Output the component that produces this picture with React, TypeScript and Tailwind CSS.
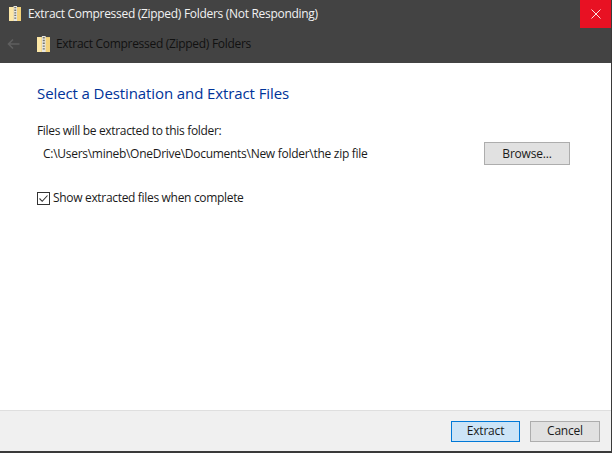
function ZipIcon({ width, height }: { width: number; height: number }) {
  return (
    <svg width={width} height={height} viewBox="0 0 12 15" preserveAspectRatio="none" className="shrink-0">
      <path d="M0 1 h12 v14 h-12 z" fill="#f3d27a" />
      <path d="M0 1 h4 v14 h-4 z" fill="#fce7a6" />
      <path d="M4.5 0 h3.5 v15 h-3.5 z" fill="#e6e6e2" />
      <path d="M5.3 1 h1.9 v1.3 h-1.9 z M5.3 3.6 h1.9 v1.3 h-1.9 z M5.3 6.2 h1.9 v1.3 h-1.9 z M5.3 8.8 h1.9 v1.3 h-1.9 z M5.3 11.4 h1.9 v1.3 h-1.9 z" fill="#77756a" />
    </svg>
  );
}

export default function App() {
  return (
    <div className="flex h-[453px] w-[612px] flex-col overflow-hidden border-r border-b-2 border-[#3a3a3a] bg-white font-['Open_Sans','Noto_Sans',sans-serif] text-[12px] text-[#1a1a1a]">
      {/* Title bar */}
      <div className="flex h-[28px] shrink-0 items-start bg-[#434343]">
        <div className="flex h-[27px] flex-1 items-center gap-[7px] pl-[9px]">
          <ZipIcon width={12} height={15} />
          <span className="text-[12px] tracking-[-0.3px] text-[#f2f2f2]">Extract Compressed (Zipped) Folders (Not Responding)</span>
        </div>
        <div className="flex h-[28px] w-[31px] items-center justify-center bg-[#e81123]">
          <svg width="10" height="10" viewBox="0 0 10 10">
            <path d="M0.5 0.5 L9.5 9.5 M9.5 0.5 L0.5 9.5" stroke="#fbe3e5" strokeWidth="1" fill="none" />
          </svg>
        </div>
      </div>

      {/* Navigation bar */}
      <div className="flex h-[35px] shrink-0 items-center bg-[#434343] pb-[3px] pl-[7px]">
        <svg width="13" height="12" viewBox="0 0 13 12" className="shrink-0">
          <path d="M12.5 6 H1.5 M6 1.5 L1.5 6 L6 10.5" stroke="#5f5f5f" strokeWidth="1.6" fill="none" />
        </svg>
        <div className="ml-[17px] flex items-center gap-[6px]">
          <ZipIcon width={13} height={16} />
          <span className="text-[12px] tracking-[-0.3px] text-[#111111]">Extract Compressed (Zipped) Folders</span>
        </div>
      </div>

      {/* Content */}
      <div className="flex flex-1 flex-col pl-[37px] pr-[41px]">
        <h1 className="mt-[19px] text-[15px] leading-[22px] font-normal tracking-[-0.1px] text-[#003399]">Select a Destination and Extract Files</h1>
        <p className="mt-[19px] leading-[16px] tracking-[-0.33px]">Files will be extracted to this folder:</p>
        <div className="mt-[3px] flex items-center justify-between">
          <span className="pt-[1px] pl-[6px] tracking-[-0.28px]">C:\Users\mineb\OneDrive\Documents\New folder\the zip file</span>
          <button className="h-[23px] w-[86px] border border-[#adadad] bg-[#e1e1e1] tracking-[-0.2px]">Browse...</button>
        </div>
        <label className="mt-[24px] flex items-center gap-[3px] tracking-[-0.32px]">
          <span className="flex h-[13px] w-[13px] items-center justify-center border border-[#333333] bg-white">
            <svg width="11" height="11" viewBox="0 0 11 11">
              <path d="M1.5 5.5 L4.2 8.3 L9.5 2.5" stroke="#333333" strokeWidth="1.1" fill="none" />
            </svg>
          </span>
          Show extracted files when complete
        </label>
      </div>

      {/* Footer */}
      <div className="flex h-[41px] shrink-0 items-center justify-end gap-[10px] border-t border-[#dfdfdf] bg-[#f0f0f0] pr-[11px]">
        <button className="h-[21px] w-[69px] border border-[#0078d7] bg-[#cce4f7] tracking-[-0.2px]">Extract</button>
        <button className="h-[21px] w-[70px] border border-[#adadad] bg-[#e1e1e1] tracking-[-0.2px]">Cancel</button>
      </div>
    </div>
  );
}
